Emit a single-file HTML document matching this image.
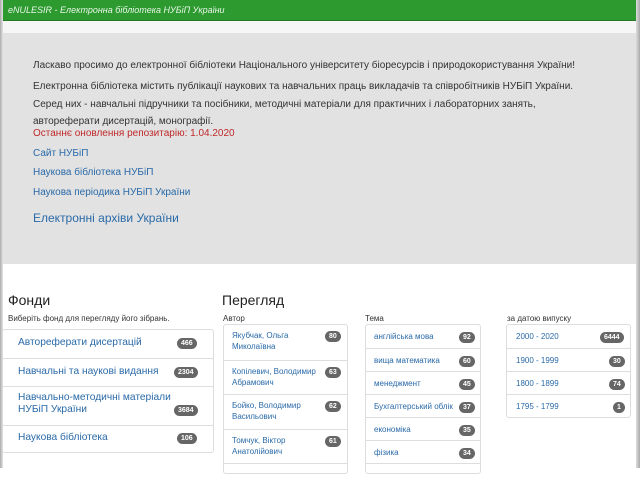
<!DOCTYPE html>
<html><head><meta charset="utf-8"><style>
*{margin:0;padding:0;box-sizing:border-box}
body{width:640px;height:468px;overflow:hidden;background:#fff;font-family:"Liberation Sans",sans-serif;position:relative}
.a{position:absolute;white-space:nowrap}
.top{position:absolute;left:0;top:0;width:640px;height:21px;background:#2c9a2e;border-bottom:1px solid #237a25}
.top span{position:absolute;left:8px;top:5px;font-size:9px;font-style:italic;color:#e8f5e8}
.strip{position:absolute;left:0;top:21px;width:640px;height:12px;background:#f6f6f6}
.jumbo{position:absolute;left:0;top:33px;width:640px;height:231px;background:#e2e2e2}
.edgeL{position:absolute;left:0;top:0;width:3px;height:468px;background:linear-gradient(90deg,#aaa,#e5e5e5)}
.edgeR{position:absolute;right:0;top:0;width:4px;height:468px;background:linear-gradient(90deg,#ddd,#aaa)}
.t{font-size:10px;color:#333}
.l{font-size:10px;color:#2a6aa8}
.list{position:absolute;border:1px solid #ddd;border-radius:3px;background:#fff}
.it{position:absolute;left:0;right:0;border-top:1px solid #ddd;color:#2a6aa8}
.b{position:absolute;background:#666;color:#fff;font-size:7px;font-weight:bold;border-radius:8px;padding:2px 4px;line-height:7px}
h3{position:absolute;font-weight:normal;font-size:14px;color:#222}
.s{font-size:8px;color:#333}
.f{font-size:10.2px}
</style></head><body>
<div class="top"><span>eNULESIR - Електронна бібліотека НУБіП України</span></div>
<div class="strip"></div>
<div class="jumbo"></div>
<div class="a t" style="left:33px;top:60px">Ласкаво просимо до електронної бібліотеки Національного університету біоресурсів і природокористування України!</div>
<div class="a t" style="left:33px;top:81px">Електронна бібліотека містить публікації наукових та навчальних праць викладачів та співробітників НУБіП України.</div>
<div class="a t" style="left:33px;top:99px">Серед них - навчальні підручники та посібники, методичні матеріали для практичних і лабораторних занять,</div>
<div class="a t" style="left:33px;top:116px">автореферати дисертацій, монографії.</div>
<div class="a t" style="left:33px;top:128px;color:#c0282a">Останнє оновлення репозитарію: 1.04.2020</div>
<div class="a l" style="left:33px;top:148px">Сайт НУБіП</div>
<div class="a l" style="left:33px;top:167px">Наукова бібліотека НУБіП</div>
<div class="a l" style="left:33px;top:187px">Наукова періодика НУБіП України</div>
<div class="a l" style="left:33px;top:211px;font-size:12px">Електронні архіви України</div>

<h3 style="left:8px;top:292px">Фонди</h3>
<div class="a s" style="left:8px;top:314px">Виберіть фонд для перегляду його зібрань.</div>
<div class="list" style="left:2px;top:329px;width:212px;height:124px">
<div class="it" style="top:0;height:28px;border:0"><span class="a f" style="left:15px;top:7px">Автореферати дисертацій</span><span class="b" style="left:174px;top:8px">466</span></div>
<div class="it" style="top:28px;height:28px"><span class="a f" style="left:15px;top:7px">Навчальні та наукові видання</span><span class="b" style="left:171px;top:8px">2304</span></div>
<div class="it" style="top:56px;height:39px"><span class="a f" style="left:15px;top:5px;line-height:12px">Навчально-методичні матеріали<br>НУБіП України</span><span class="b" style="left:171px;top:18px">3684</span></div>
<div class="it" style="top:95px;height:28px"><span class="a f" style="left:15px;top:6px">Наукова бібліотека</span><span class="b" style="left:174px;top:7px">106</span></div>
</div>

<h3 style="left:222px;top:292px">Перегляд</h3>
<div class="a s" style="left:223px;top:314px">Автор</div>
<div class="list" style="left:223px;top:324px;width:125px;height:150px;font-size:8px">
<div class="it" style="top:0;height:35px;border:0"><span class="a" style="left:8px;top:5px;line-height:11px">Якубчак, Ольга<br>Миколаївна</span><span class="b" style="left:101px;top:6px">80</span></div>
<div class="it" style="top:35px;height:34px"><span class="a" style="left:8px;top:5px;line-height:11px">Копілевич, Володимир<br>Абрамович</span><span class="b" style="left:101px;top:6px">63</span></div>
<div class="it" style="top:69px;height:35px"><span class="a" style="left:8px;top:5px;line-height:11px">Бойко, Володимир<br>Васильович</span><span class="b" style="left:101px;top:6px">62</span></div>
<div class="it" style="top:104px;height:34px"><span class="a" style="left:8px;top:5px;line-height:11px">Томчук, Віктор<br>Анатолійович</span><span class="b" style="left:101px;top:6px">61</span></div>
<div class="it" style="top:138px;height:20px"></div>
</div>

<div class="a s" style="left:365px;top:314px">Тема</div>
<div class="list" style="left:365px;top:324px;width:116px;height:150px;font-size:8px">
<div class="it" style="top:0;height:23px;border:0"><span class="a" style="left:8px;top:7px">англійська мова</span><span class="b" style="left:93px;top:7px">92</span></div>
<div class="it" style="top:23px;height:23px"><span class="a" style="left:8px;top:7px">вища математика</span><span class="b" style="left:93px;top:7px">60</span></div>
<div class="it" style="top:46px;height:23px"><span class="a" style="left:8px;top:7px">менеджмент</span><span class="b" style="left:93px;top:7px">45</span></div>
<div class="it" style="top:69px;height:23px"><span class="a" style="left:8px;top:7px">Бухгалтерський облік</span><span class="b" style="left:93px;top:7px">37</span></div>
<div class="it" style="top:92px;height:23px"><span class="a" style="left:8px;top:7px">економіка</span><span class="b" style="left:93px;top:7px">35</span></div>
<div class="it" style="top:115px;height:23px"><span class="a" style="left:8px;top:7px">фізика</span><span class="b" style="left:93px;top:7px">34</span></div>
<div class="it" style="top:138px;height:20px"></div>
</div>

<div class="a s" style="left:507px;top:314px">за датою випуску</div>
<div class="list" style="left:506px;top:324px;width:125px;height:94px;font-size:8px">
<div class="it" style="top:0;height:23px;border:0"><span class="a" style="left:9px;top:7px">2000 - 2020</span><span class="b" style="left:93px;top:7px">6444</span></div>
<div class="it" style="top:23px;height:23px"><span class="a" style="left:9px;top:7px">1900 - 1999</span><span class="b" style="left:102px;top:7px">30</span></div>
<div class="it" style="top:46px;height:23px"><span class="a" style="left:9px;top:7px">1800 - 1899</span><span class="b" style="left:102px;top:7px">74</span></div>
<div class="it" style="top:69px;height:24px"><span class="a" style="left:9px;top:7px">1795 - 1799</span><span class="b" style="left:106px;top:7px">1</span></div>
</div>
<div class="edgeL"></div><div class="edgeR"></div>
</body></html>
